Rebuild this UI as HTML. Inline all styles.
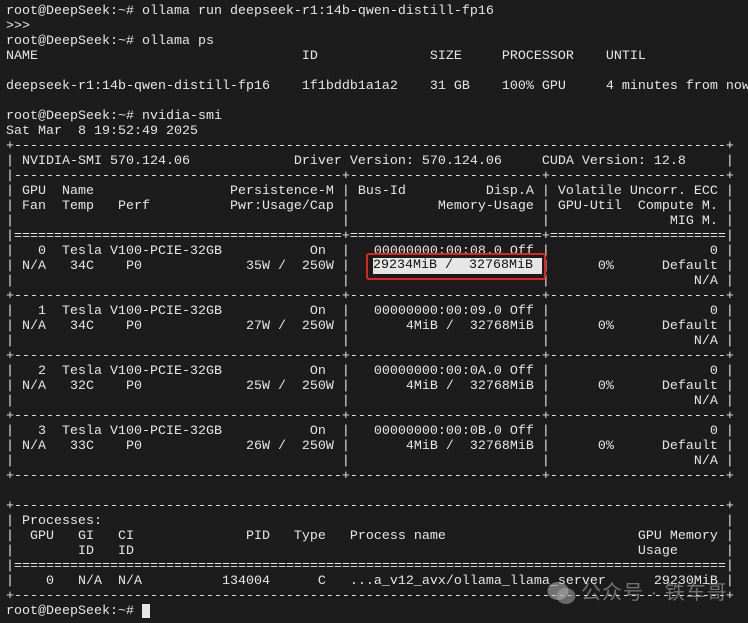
<!DOCTYPE html>
<html><head><meta charset="utf-8"><style>
html,body{margin:0;padding:0;background:#1c1c1c;width:748px;height:623px;overflow:hidden}
pre{margin:0;padding:4px 0 0 6px;font-family:"Liberation Mono",monospace;font-size:13.33px;line-height:15px;color:#e6e6e6;white-space:pre}
.hl{position:absolute;left:366px;top:253px;width:176px;height:23px;border:2px solid #e0241c;border-radius:3px}
.hlin{position:absolute;left:373px;top:258px;width:169px;height:16px;background:#e6e6e6;color:#111;font-family:"Liberation Mono",monospace;font-size:13.33px;line-height:16px;white-space:pre}
.cur{position:absolute;left:142px;top:604px;width:8px;height:14px;background:#e6e6e6}
.wm{position:absolute;left:581px;top:581px;color:rgba(200,200,200,.5);font-family:"Liberation Sans","Noto Sans CJK SC",sans-serif;font-size:20px;line-height:24px;letter-spacing:1px}
</style></head><body>
<pre>root@DeepSeek:~# ollama run deepseek-r1:14b-qwen-distill-fp16
&gt;&gt;&gt;
root@DeepSeek:~# ollama ps
NAME                                 ID              SIZE     PROCESSOR    UNTIL

deepseek-r1:14b-qwen-distill-fp16    1f1bddb1a1a2    31 GB    100% GPU     4 minutes from now

root@DeepSeek:~# nvidia-smi
Sat Mar  8 19:52:49 2025
+-----------------------------------------------------------------------------------------+
| NVIDIA-SMI 570.124.06             Driver Version: 570.124.06     CUDA Version: 12.8     |
|-----------------------------------------+------------------------+----------------------+
| GPU  Name                 Persistence-M | Bus-Id          Disp.A | Volatile Uncorr. ECC |
| Fan  Temp   Perf          Pwr:Usage/Cap |           Memory-Usage | GPU-Util  Compute M. |
|                                         |                        |               MIG M. |
|=========================================+========================+======================|
|   0  Tesla V100-PCIE-32GB           On  |   00000000:00:08.0 Off |                    0 |
| N/A   34C    P0             35W /  250W |   29234MiB /  32768MiB |      0%      Default |
|                                         |                        |                  N/A |
+-----------------------------------------+------------------------+----------------------+
|   1  Tesla V100-PCIE-32GB           On  |   00000000:00:09.0 Off |                    0 |
| N/A   34C    P0             27W /  250W |       4MiB /  32768MiB |      0%      Default |
|                                         |                        |                  N/A |
+-----------------------------------------+------------------------+----------------------+
|   2  Tesla V100-PCIE-32GB           On  |   00000000:00:0A.0 Off |                    0 |
| N/A   32C    P0             25W /  250W |       4MiB /  32768MiB |      0%      Default |
|                                         |                        |                  N/A |
+-----------------------------------------+------------------------+----------------------+
|   3  Tesla V100-PCIE-32GB           On  |   00000000:00:0B.0 Off |                    0 |
| N/A   33C    P0             26W /  250W |       4MiB /  32768MiB |      0%      Default |
|                                         |                        |                  N/A |
+-----------------------------------------+------------------------+----------------------+

+-----------------------------------------------------------------------------------------+
| Processes:                                                                              |
|  GPU   GI   CI              PID   Type   Process name                        GPU Memory |
|        ID   ID                                                               Usage      |
|=========================================================================================|
|    0   N/A  N/A          134004      C   ...a_v12_avx/ollama_llama_server      29230MiB |
+-----------------------------------------------------------------------------------------+
root@DeepSeek:~# </pre>
<div class="hl"></div>
<div class="hlin">29234MiB /  32768MiB</div>
<div class="cur"></div>
<svg style="position:absolute;left:546px;top:581px" width="32" height="24" viewBox="0 0 32 24">
<ellipse cx="12" cy="10" rx="10.5" ry="9" fill="rgba(200,200,200,.5)"/>
<ellipse cx="20" cy="15" rx="9.5" ry="8" fill="rgba(170,170,170,.55)"/>
</svg>
<div class="wm">公众号 · 铁车哥</div>
</body></html>
